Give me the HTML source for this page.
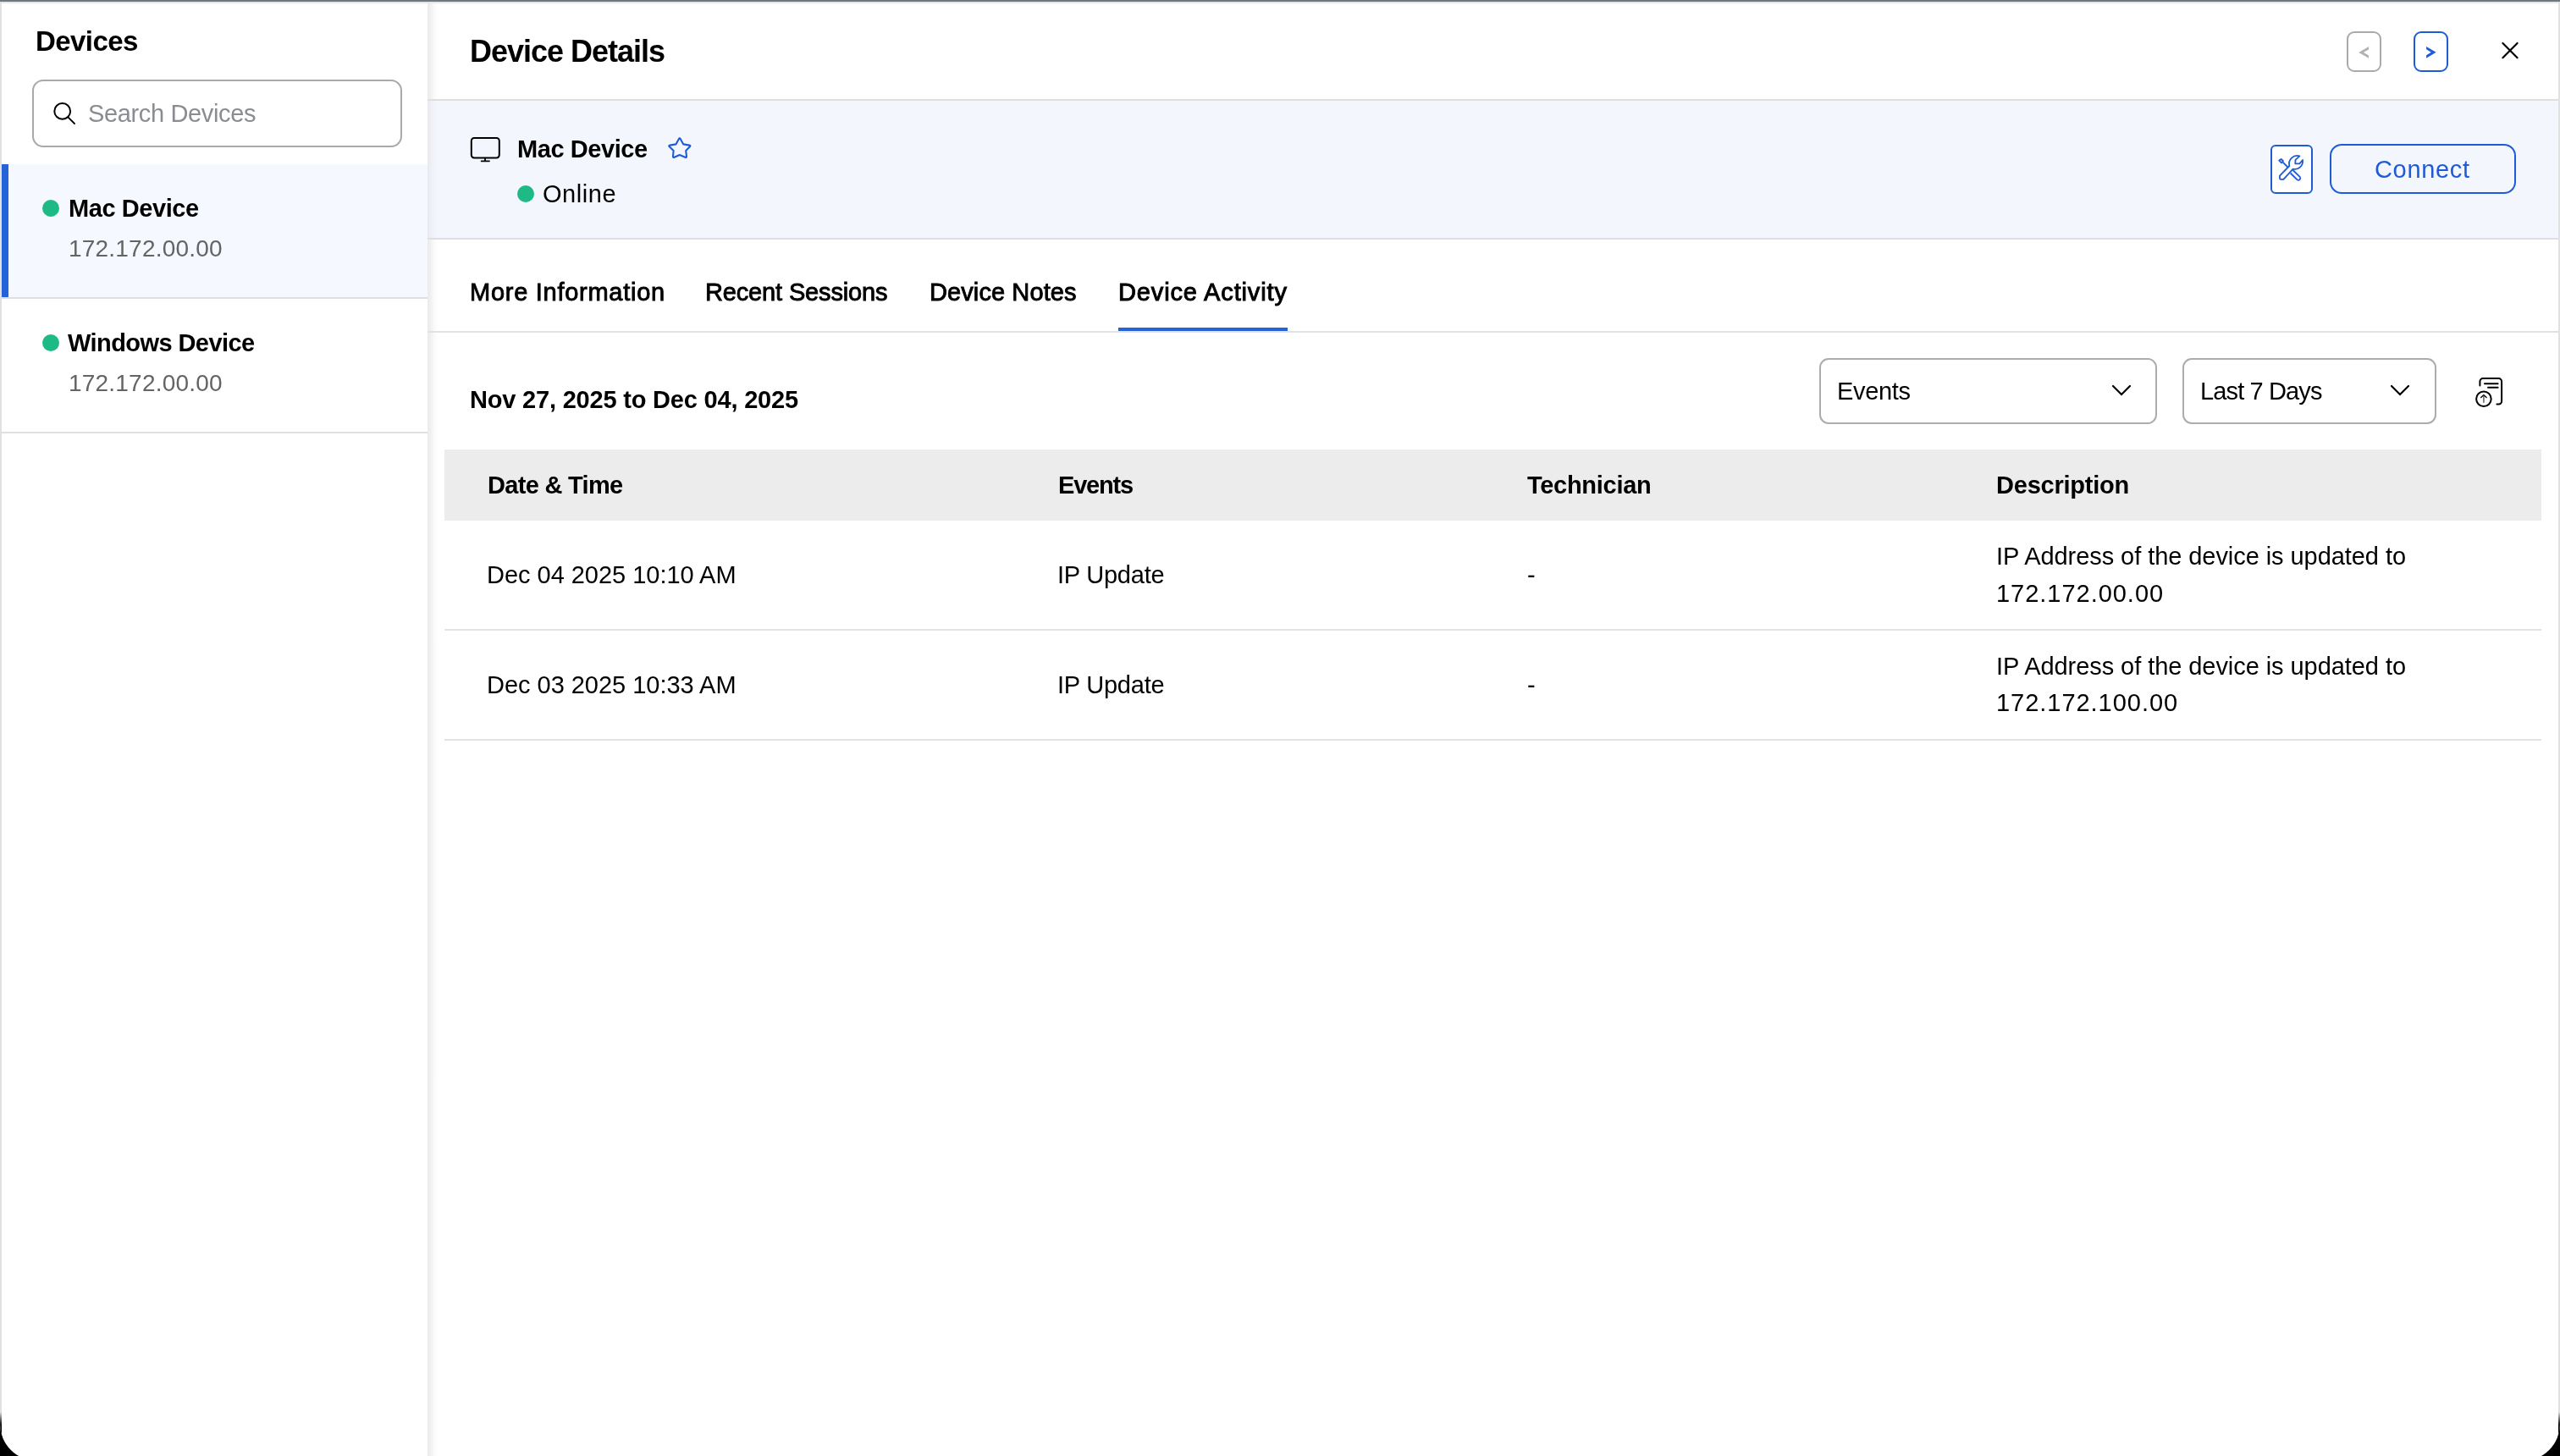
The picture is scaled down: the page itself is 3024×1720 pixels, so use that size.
<!DOCTYPE html>
<html><head><meta charset="utf-8">
<style>
html,body{margin:0;padding:0;background:#000;width:3024px;height:1720px;overflow:hidden}
*{box-sizing:border-box}
#panel{position:absolute;left:0;top:0;width:3024px;height:1726px;background:#fff;border-radius:0 0 44px 44px;overflow:hidden;font-family:"Liberation Sans",sans-serif}
.abs{position:absolute}
.tx{position:absolute;white-space:nowrap;font-family:"Liberation Sans",sans-serif;will-change:transform}
#t_devices{left:42.00px;top:32.00px;font-size:33px;line-height:33px;font-weight:700;color:#000;letter-spacing:-0.569px;}
#t_search{left:104.20px;top:119.80px;font-size:29px;line-height:29px;font-weight:400;color:#8a8c91;letter-spacing:-0.353px;}
#t_mac_sb{left:80.50px;top:231.90px;font-size:29px;line-height:29px;font-weight:700;color:#000;letter-spacing:-0.428px;}
#t_ip1{left:80.60px;top:279.90px;font-size:28px;line-height:28px;font-weight:400;color:#646464;letter-spacing:0.209px;}
#t_win_sb{left:79.60px;top:390.60px;font-size:29px;line-height:29px;font-weight:700;color:#000;letter-spacing:-0.573px;}
#t_ip2{left:80.60px;top:438.90px;font-size:28px;line-height:28px;font-weight:400;color:#646464;letter-spacing:0.209px;}
#t_details{left:555.40px;top:43.00px;font-size:36px;line-height:36px;font-weight:700;color:#000;letter-spacing:-1.009px;}
#t_mac_h{left:610.90px;top:161.50px;font-size:29px;line-height:29px;font-weight:700;color:#000;letter-spacing:-0.428px;}
#t_online{left:641.20px;top:215.00px;font-size:29px;line-height:29px;font-weight:400;color:#000;letter-spacing:0.560px;}
#t_connect{left:2805.00px;top:185.90px;font-size:29px;line-height:29px;font-weight:400;color:#1f5bd6;letter-spacing:0.674px;}
#t_tab1{left:554.60px;top:330.90px;font-size:29px;line-height:29px;font-weight:400;color:#000;letter-spacing:0.729px;-webkit-text-stroke:0.9px #000;}
#t_tab2{left:832.60px;top:330.90px;font-size:29px;line-height:29px;font-weight:400;color:#000;letter-spacing:-0.151px;-webkit-text-stroke:0.9px #000;}
#t_tab3{left:1097.60px;top:330.90px;font-size:29px;line-height:29px;font-weight:400;color:#000;letter-spacing:0.095px;-webkit-text-stroke:0.9px #000;}
#t_tab4{left:1320.60px;top:330.90px;font-size:29px;line-height:29px;font-weight:400;color:#000;letter-spacing:0.854px;-webkit-text-stroke:1.0px #000;}
#t_range{left:555.00px;top:458.20px;font-size:29px;line-height:29px;font-weight:700;color:#000;letter-spacing:-0.194px;}
#t_dd1{left:2170.30px;top:447.90px;font-size:29px;line-height:29px;font-weight:400;color:#000;letter-spacing:-0.351px;}
#t_dd2{left:2599.30px;top:447.90px;font-size:29px;line-height:29px;font-weight:400;color:#000;letter-spacing:-0.863px;}
#t_h1{left:575.60px;top:558.50px;font-size:29px;line-height:29px;font-weight:700;color:#000;letter-spacing:-0.695px;}
#t_h2{left:1249.60px;top:558.50px;font-size:29px;line-height:29px;font-weight:700;color:#000;letter-spacing:-1.194px;}
#t_h3{left:1804.10px;top:558.50px;font-size:29px;line-height:29px;font-weight:700;color:#000;letter-spacing:-0.291px;}
#t_h4{left:2358.10px;top:558.50px;font-size:29px;line-height:29px;font-weight:700;color:#000;letter-spacing:-0.221px;}
#t_r1c1{left:575.00px;top:664.80px;font-size:29px;line-height:29px;font-weight:400;color:#000;letter-spacing:-0.025px;}
#t_r1c2{left:1249.00px;top:664.80px;font-size:29px;line-height:29px;font-weight:400;color:#000;letter-spacing:-0.230px;}
#t_r1c3{left:1804.00px;top:664.80px;font-size:29px;line-height:29px;font-weight:400;color:#000;letter-spacing:0.000px;}
#t_r1d1{left:2357.50px;top:643.00px;font-size:29px;line-height:29px;font-weight:400;color:#000;letter-spacing:-0.063px;}
#t_r1d2{left:2357.50px;top:686.60px;font-size:29px;line-height:29px;font-weight:400;color:#000;letter-spacing:0.973px;}
#t_r2c1{left:575.00px;top:794.60px;font-size:29px;line-height:29px;font-weight:400;color:#000;letter-spacing:-0.025px;}
#t_r2c2{left:1249.00px;top:794.60px;font-size:29px;line-height:29px;font-weight:400;color:#000;letter-spacing:-0.230px;}
#t_r2c3{left:1804.00px;top:794.60px;font-size:29px;line-height:29px;font-weight:400;color:#000;letter-spacing:0.000px;}
#t_r2d1{left:2357.50px;top:773.00px;font-size:29px;line-height:29px;font-weight:400;color:#000;letter-spacing:-0.063px;}
#t_r2d2{left:2357.50px;top:816.00px;font-size:29px;line-height:29px;font-weight:400;color:#000;letter-spacing:0.965px;}
</style></head><body>
<div id="panel">
  <!-- frame -->
  <div class="abs" style="left:0;top:0;width:3024px;height:2px;background:#6f7882"></div>
  <div class="abs" style="left:0;top:2px;width:3024px;height:2px;background:#e6e6e6"></div>
  <div class="abs" style="left:0;top:2px;width:2px;height:1724px;background:linear-gradient(to bottom,#e1e1e1 0,#e1e1e1 1666px,#000 1682px,#000 100%)"></div>
  <div class="abs" style="left:3022px;top:2px;width:2px;height:1724px;background:linear-gradient(to bottom,#e1e1e1 0,#e1e1e1 1666px,#000 1682px,#000 100%)"></div>

  <!-- sidebar -->
  <div class="abs" style="left:38px;top:94px;width:437px;height:80px;border:2px solid #a9a9ab;border-radius:13px"></div>
  <svg class="abs" style="left:56px;top:112px" width="40" height="40" viewBox="0 0 40 40">
    <circle cx="17.7" cy="19.4" r="9.4" fill="none" stroke="#000" stroke-width="2"/>
    <line x1="24.3" y1="26.4" x2="32" y2="34" stroke="#000" stroke-width="1.8" stroke-linecap="round"/>
  </svg>
  <div class="abs" style="left:2px;top:194px;width:503px;height:157px;background:#f5f8fe"></div>
  <div class="abs" style="left:2px;top:194px;width:8px;height:159px;background:#2563d8"></div>
  <div class="abs" style="left:2px;top:351px;width:503px;height:2px;background:#dfdfdf"></div>
  <div class="abs" style="left:2px;top:510px;width:503px;height:2px;background:#dfdfdf"></div>
  <div class="abs" style="left:50px;top:236px;width:20px;height:20px;border-radius:50%;background:#1dba85"></div>
  <div class="abs" style="left:50px;top:395px;width:20px;height:20px;border-radius:50%;background:#1dba85"></div>

  <!-- main -->
  <div class="abs" style="left:505px;top:4px;width:12px;height:1720px;background:linear-gradient(to right,#eaeaea 0,#efefef 3px,#f8f8f8 7px,rgba(255,255,255,0) 12px)"></div>
  <div class="abs" style="left:505px;top:117px;width:2517px;height:2px;background:#dedede"></div>
  <div class="abs" style="left:505px;top:119px;width:2517px;height:162px;background:#f3f6fd"></div>
  <div class="abs" style="left:505px;top:119px;width:12px;height:162px;background:linear-gradient(to right,#e8e9ed 0,#eceef3 3px,#f1f3fa 7px,rgba(243,246,253,0) 12px)"></div>
  <div class="abs" style="left:505px;top:281px;width:2517px;height:2px;background:#dedede"></div>
  <div class="abs" style="left:505px;top:391px;width:2517px;height:2px;background:#e2e2e2"></div>
  <div class="abs" style="left:1321px;top:387px;width:200px;height:4px;background:#2563d8"></div>

  <!-- header buttons -->
  <div class="abs" style="left:2772px;top:37px;width:41px;height:48px;border:2px solid #aaaaab;border-radius:9px"></div>
  <svg class="abs" style="left:2772px;top:37px" width="41" height="48" viewBox="0 0 41 48">
    <path d="M26 18.1 L14.2 24.9 L26 31.7 L26 28.4 L20 24.9 L26 21.4 Z" fill="#b0b1b4"/>
  </svg>
  <div class="abs" style="left:2851px;top:37px;width:41px;height:48px;border:2px solid #1f5bd6;border-radius:9px"></div>
  <svg class="abs" style="left:2851px;top:37px" width="41" height="48" viewBox="0 0 41 48">
    <path d="M15.1 17.9 L26.6 24.7 L15.1 31.7 L15.1 28.2 L20.8 24.7 L15.1 21.2 Z" fill="#1f5bd8"/>
  </svg>
  <svg class="abs" style="left:2945px;top:40px" width="40" height="40" viewBox="0 0 40 40">
    <path d="M11.4 11 L28.6 28.2 M28.6 11 L11.4 28.2" fill="none" stroke="#000" stroke-width="2.2" stroke-linecap="round"/>
  </svg>

  <!-- device info -->
  <svg class="abs" style="left:550px;top:150px" width="50" height="50" viewBox="0 0 50 50">
    <rect x="6.8" y="13" width="33" height="23.4" rx="3.3" fill="none" stroke="#000" stroke-width="2"/>
    <line x1="23" y1="36.4" x2="23" y2="40" stroke="#000" stroke-width="1.8"/>
    <line x1="18.6" y1="40.3" x2="28" y2="40.3" stroke="#000" stroke-width="1.8" stroke-linecap="round"/>
  </svg>
  <svg class="abs" style="left:780px;top:155px" width="45" height="40" viewBox="0 0 45 40">
    <path d="M21.83 9.16 Q22.80 7.40 23.79 9.16 L27.30 15.40 L34.24 16.65 Q36.20 17.00 34.88 18.32 L30.20 23.00 L30.98 29.71 Q31.20 31.60 29.35 30.81 L22.80 28.00 L16.56 30.81 Q14.80 31.60 14.98 29.71 L15.60 23.00 L10.76 18.32 Q9.40 17.00 11.38 16.65 L18.40 15.40 Z" fill="none" stroke="#1f5bd6" stroke-width="2.1" stroke-linejoin="round"/>
  </svg>
  <div class="abs" style="left:611px;top:219px;width:20px;height:20px;border-radius:50%;background:#1dba85"></div>
  <div class="abs" style="left:2682px;top:171px;width:50px;height:58px;border:2px solid #1f5bd6;border-radius:6px;background:#fff"></div>
  <svg class="abs" style="left:2676px;top:165px" width="64" height="70" viewBox="0 0 64 70">
    <g fill="none" stroke="#1f5bd6" stroke-width="1.8" stroke-linejoin="round">
      <path d="M16.2 24.6 L18.7 22.9 L21.0 25.1 L19.0 27.3 Z"/>
      <path d="M20.6 26.7 L26.4 32.5"/>
      <path d="M16.95 42.6 L28.3 31.0 A9.6 9.6 0 0 1 40.4 19.45 L35.5 23.8 L35.3 28.3 L40.3 28.4 L44.0 24.0 A9.4 9.4 0 0 1 32.6 34.6 L21.4 46.9 L18.3 46.9 Q16.95 46.9 16.95 45.6 Z"/>
      <path d="M32.5 36 L40.9 44.2 A2.3 2.3 0 0 1 37.6 47.3 L29.6 39.5"/>
    </g>
  </svg>
  <div class="abs" style="left:2752px;top:170px;width:220px;height:59px;border:2px solid #1f5bd6;border-radius:14px"></div>

  <!-- filters -->
  <div class="abs" style="left:2149px;top:423px;width:399px;height:78px;border:2px solid #acacac;border-radius:11px"></div>
  <svg class="abs" style="left:2485px;top:440px" width="45" height="40" viewBox="0 0 45 40">
    <path d="M11 16 L21 26 L31 16" fill="none" stroke="#000" stroke-width="2.2" stroke-linecap="round" stroke-linejoin="miter"/>
  </svg>
  <div class="abs" style="left:2578px;top:423px;width:300px;height:78px;border:2px solid #acacac;border-radius:11px"></div>
  <svg class="abs" style="left:2814px;top:440px" width="45" height="40" viewBox="0 0 45 40">
    <path d="M11 16 L21 26 L31 16" fill="none" stroke="#000" stroke-width="2.2" stroke-linecap="round" stroke-linejoin="miter"/>
  </svg>
  <svg class="abs" style="left:2910px;top:436px" width="56" height="56" viewBox="0 0 56 56">
    <g fill="none" stroke="#000" stroke-width="2" stroke-linecap="round">
      <path d="M19.4 19.6 L19.4 14.6 A3.5 3.5 0 0 1 22.9 11.1 L41.6 11.1 A3.5 3.5 0 0 1 45.1 14.6 L45.1 38.1 A3.5 3.5 0 0 1 41.6 41.6 L39.4 41.6"/>
      <path d="M25 17.2 L40.6 17.2"/>
      <path d="M29 21.8 L40.6 21.8"/>
      <circle cx="23.9" cy="35.2" r="8.8"/>
    </g>
    <path d="M23.9 39.8 L23.9 32" fill="none" stroke="#6b7480" stroke-width="1.7"/>
    <path d="M20.7 33.6 L23.9 30.6 L27.1 33.6" fill="none" stroke="#000" stroke-width="1.4" stroke-linecap="round"/>
  </svg>

  <!-- table -->
  <div class="abs" style="left:525px;top:531px;width:2477px;height:84px;background:#ececec"></div>
  <div class="abs" style="left:525px;top:743px;width:2477px;height:2px;background:#e2e2e2"></div>
  <div class="abs" style="left:525px;top:873px;width:2477px;height:2px;background:#e2e2e2"></div>

  <div class='tx' id='t_devices'>Devices</div>
<div class='tx' id='t_search'>Search Devices</div>
<div class='tx' id='t_mac_sb'>Mac Device</div>
<div class='tx' id='t_ip1'>172.172.00.00</div>
<div class='tx' id='t_win_sb'>Windows Device</div>
<div class='tx' id='t_ip2'>172.172.00.00</div>
<div class='tx' id='t_details'>Device Details</div>
<div class='tx' id='t_mac_h'>Mac Device</div>
<div class='tx' id='t_online'>Online</div>
<div class='tx' id='t_connect'>Connect</div>
<div class='tx' id='t_tab1'>More Information</div>
<div class='tx' id='t_tab2'>Recent Sessions</div>
<div class='tx' id='t_tab3'>Device Notes</div>
<div class='tx' id='t_tab4'>Device Activity</div>
<div class='tx' id='t_range'>Nov 27, 2025 to Dec 04, 2025</div>
<div class='tx' id='t_dd1'>Events</div>
<div class='tx' id='t_dd2'>Last 7 Days</div>
<div class='tx' id='t_h1'>Date &amp; Time</div>
<div class='tx' id='t_h2'>Events</div>
<div class='tx' id='t_h3'>Technician</div>
<div class='tx' id='t_h4'>Description</div>
<div class='tx' id='t_r1c1'>Dec 04 2025 10:10 AM</div>
<div class='tx' id='t_r1c2'>IP Update</div>
<div class='tx' id='t_r1c3'>-</div>
<div class='tx' id='t_r1d1'>IP Address of the device is updated to</div>
<div class='tx' id='t_r1d2'>172.172.00.00</div>
<div class='tx' id='t_r2c1'>Dec 03 2025 10:33 AM</div>
<div class='tx' id='t_r2c2'>IP Update</div>
<div class='tx' id='t_r2c3'>-</div>
<div class='tx' id='t_r2d1'>IP Address of the device is updated to</div>
<div class='tx' id='t_r2d2'>172.172.100.00</div>
</div>
</body></html>
